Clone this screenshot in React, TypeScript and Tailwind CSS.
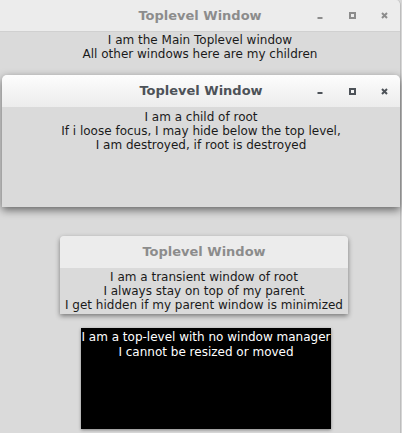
import React from 'react';

const font = { fontFamily: '"DejaVu Sans", Verdana, sans-serif' };

function Controls({ tone }: { tone: string }) {
  return (
    <div className="absolute right-0 top-0 flex h-full items-center">
      <div className="flex h-full w-[32px] items-center justify-center">
        <svg width="6" height="8" viewBox="0 0 6 8">
          <rect x="0.5" y="5" width="5" height="2" fill={tone} />
        </svg>
      </div>
      <div className="flex h-full w-[32px] items-center justify-center">
        <svg width="7" height="7" viewBox="0 0 7 7">
          <rect x="1" y="1" width="5" height="5" fill="none" stroke={tone} strokeWidth="2" />
        </svg>
      </div>
      <div className="flex h-full w-[32px] items-center justify-center">
        <svg width="7" height="7" viewBox="0 0 7 7">
          <path d="M1 1 L6 6 M6 1 L1 6" stroke={tone} strokeWidth="2" />
        </svg>
      </div>
    </div>
  );
}

function TextBlock({ lines }: { lines: string[] }) {
  return (
    <div className="flex flex-col items-center text-[12px] leading-[14px] text-[#1a1a1a]">
      {lines.map((l) => (
        <span key={l}>{l}</span>
      ))}
    </div>
  );
}

export default function App() {
  return (
    <div
      className="relative h-[433px] w-[402px] overflow-hidden bg-[#d6d6d6]"
      style={font}
    >
      {/* main toplevel */}
      <div className="absolute left-0 top-0 h-[433px] w-[401px] overflow-hidden rounded-tr-[5px] border-r border-[#bdbdbd] bg-[#dadada]">
        <div className="relative flex h-[32px] items-center justify-center border-b border-[#d0d0d0] bg-[#ececec]">
          <span className="text-[13px] font-bold text-[#8c8c8c]">
            Toplevel Window
          </span>
          <Controls tone="#8c8c8c" />
        </div>
        <div className="pt-[1px]">
          <TextBlock
            lines={[
              'I am the Main Toplevel window',
              'All other windows here are my children',
            ]}
          />
        </div>
      </div>

      {/* child */}
      <div className="absolute left-[2px] top-[75px] h-[132px] w-[398px] overflow-hidden rounded-t-[5px] bg-[#dadada] shadow-[0_3px_8px_rgba(0,0,0,0.55)]">
        <div className="relative flex h-[32px] items-center justify-center bg-gradient-to-b from-[#fdfdfd] to-[#ececec]">
          <span className="text-[13px] font-bold text-[#4d5258]">
            Toplevel Window
          </span>
          <Controls tone="#4d5258" />
        </div>
        <div className="pt-[3px]">
          <TextBlock
            lines={[
              'I am a child of root',
              'If i loose focus, I may hide below the top level,',
              'I am destroyed, if root is destroyed',
            ]}
          />
        </div>
      </div>

      {/* transient */}
      <div className="absolute left-[60px] top-[236px] h-[78px] w-[288px] overflow-hidden rounded-t-[4px] bg-[#dadada] shadow-[0_2px_5px_rgba(0,0,0,0.45)]">
        <div className="flex h-[32px] items-center justify-center bg-[#ececec]">
          <span className="text-[13px] font-bold text-[#8c8c8c]">
            Toplevel Window
          </span>
        </div>
        <div className="pt-[2px]">
          <TextBlock
            lines={[
              'I am a transient window of root',
              'I always stay on top of my parent',
              'I get hidden if my parent window is minimized',
            ]}
          />
        </div>
      </div>

      {/* no window manager */}
      <div className="absolute left-[81px] top-[328px] flex h-[101px] w-[250px] flex-col items-center bg-black pt-[2px] text-[12px] leading-[15px] text-white shadow-[0_1px_3px_rgba(0,0,0,0.4)]">
        <span>I am a top-level with no window manager</span>
        <span>I cannot be resized or moved</span>
      </div>
    </div>
  );
}
